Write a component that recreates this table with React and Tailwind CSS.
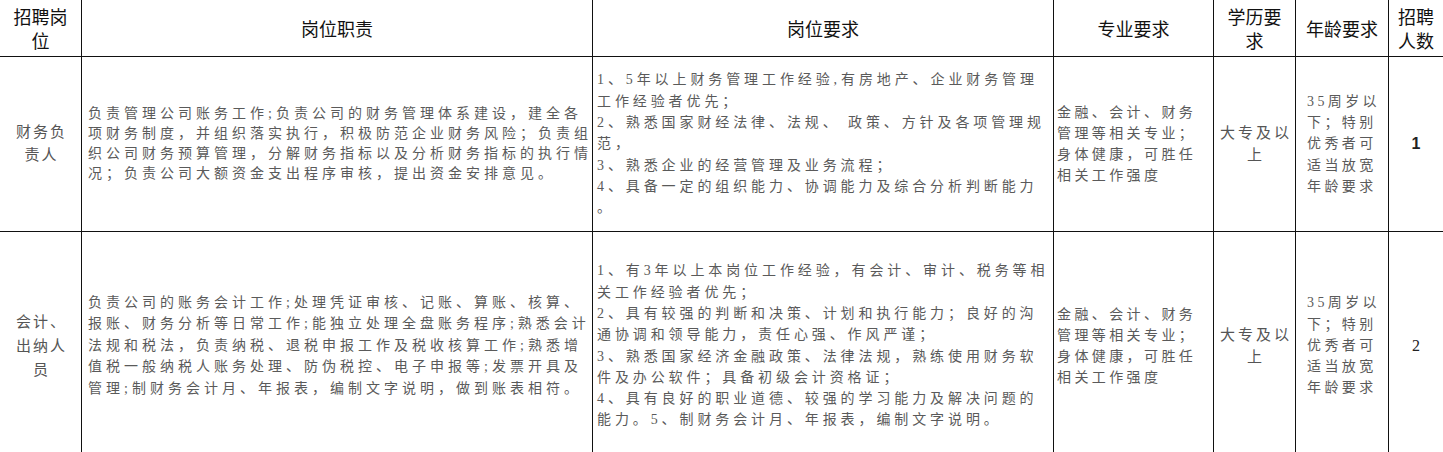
import React from 'react';

const serif = "font-['Liberation_Serif','Noto_Sans_CJK_SC',serif]";

const headers = [
  ['招聘岗', '位'],
  ['岗位职责'],
  ['岗位要求'],
  ['专业要求'],
  ['学历要', '求'],
  ['年龄要求'],
  ['招聘', '人数'],
];

const rows = [
  {
    height: 'h-[175px]',
    title: ['财务负', '责人'],
    titleLeading: 'leading-[23px]',
    duty: [
      '负责管理公司账务工作;负责公司的财务管理体系建设，建全各',
      '项财务制度，并组织落实执行，积极防范企业财务风险；负责组',
      '织公司财务预算管理，分解财务指标以及分析财务指标的执行情',
      '况；负责公司大额资金支出程序审核，提出资金安排意见。',
    ],
    dutyLeading: 'leading-[20px]',
    req: [
      '1、5年以上财务管理工作经验,有房地产、企业财务管理',
      '工作经验者优先；',
      '2、熟悉国家财经法律、法规、 政策、方针及各项管理规',
      '范，',
      '3、熟悉企业的经营管理及业务流程；',
      '4、具备一定的组织能力、协调能力及综合分析判断能力',
      '。',
    ],
    count: '1',
    countClass: "font-bold font-['Liberation_Sans',sans-serif]",
  },
  {
    height: 'h-[228px]',
    title: ['会计、', '出纳人', '员'],
    titleLeading: 'leading-[24px]',
    duty: [
      '负责公司的账务会计工作;处理凭证审核、记账、算账、核算、',
      '报账、财务分析等日常工作;能独立处理全盘账务程序;熟悉会计',
      '法规和税法，负责纳税、退税申报工作及税收核算工作;熟悉增',
      '值税一般纳税人账务处理、防伪税控、电子申报等;发票开具及',
      '管理;制财务会计月、年报表，编制文字说明，做到账表相符。',
    ],
    dutyLeading: 'leading-[21.5px]',
    req: [
      '1、有3年以上本岗位工作经验，有会计、审计、税务等相',
      '关工作经验者优先；',
      '2、具有较强的判断和决策、计划和执行能力；良好的沟',
      '通协调和领导能力，责任心强、作风严谨；',
      '3、熟悉国家经济金融政策、法律法规，熟练使用财务软',
      '件及办公软件；具备初级会计资格证；',
      '4、具有良好的职业道德、较强的学习能力及解决问题的',
      '能力。5、制财务会计月、年报表，编制文字说明。',
    ],
    count: '2',
    countClass: '',
  },
];

const major = ['金融、会计、财务', '管理等相关专业；', '身体健康，可胜任', '相关工作强度'];
const edu = ['大专及以', '上'];
const age = ['35周岁以', '下；特别', '优秀者可', '适当放宽', '年龄要求'];

const Lines = ({ lines }) => lines.map((l, i) => (
  <div key={i} className="whitespace-nowrap">{l}</div>
));

const cell = 'border-r border-b border-[#111] flex items-center';

export default function App() {
  return (
    <div className="w-[1443px] bg-white overflow-hidden">
      <div className="grid grid-cols-[82px_511px_461px_160px_82px_93px_54px]">
        {headers.map((h, i) => (
          <div
            key={i}
            className={`h-[57px] justify-center text-center text-[18px] leading-[24px] text-[#111] font-['Noto_Sans_CJK_SC',sans-serif] ${cell} ${i === 6 ? 'border-r-0' : ''}`}
          >
            <div><Lines lines={h} /></div>
          </div>
        ))}

        {rows.map((r, ri) => (
          <React.Fragment key={ri}>
            <div className={`${r.height} ${cell} ${serif} justify-center text-[15px] tracking-[2px] text-[#555] ${r.titleLeading}`}>
              <div className="text-center pl-[2px]"><Lines lines={r.title} /></div>
            </div>
            <div className={`${r.height} ${cell} ${serif} pl-[6px] text-[14px] tracking-[4px] text-[#5a5a5a] ${r.dutyLeading}`}>
              <div><Lines lines={r.duty} /></div>
            </div>
            <div className={`${r.height} ${cell} ${serif} pl-[4px] text-[14px] tracking-[3.9px] text-[#5a5a5a] leading-[21.3px]`}>
              <div><Lines lines={r.req} /></div>
            </div>
            <div className={`${r.height} ${cell} ${serif} pl-[3px] text-[14px] tracking-[3.4px] text-[#5a5a5a] leading-[21px]`}>
              <div><Lines lines={major} /></div>
            </div>
            <div className={`${r.height} ${cell} ${serif} justify-center text-[15px] tracking-[3px] text-[#555] leading-[22px]`}>
              <div className="text-center pl-[3px]"><Lines lines={edu} /></div>
            </div>
            <div className={`${r.height} ${cell} ${serif} justify-center text-[14px] tracking-[3.4px] text-[#5a5a5a] leading-[21.3px]`}>
              <div className="pl-[3px]"><Lines lines={age} /></div>
            </div>
            <div className={`${r.height} ${cell} ${serif} border-r-0 justify-center text-[16px] text-[#222]`}>
              <span className={r.countClass}>{r.count}</span>
            </div>
          </React.Fragment>
        ))}
      </div>
    </div>
  );
}
